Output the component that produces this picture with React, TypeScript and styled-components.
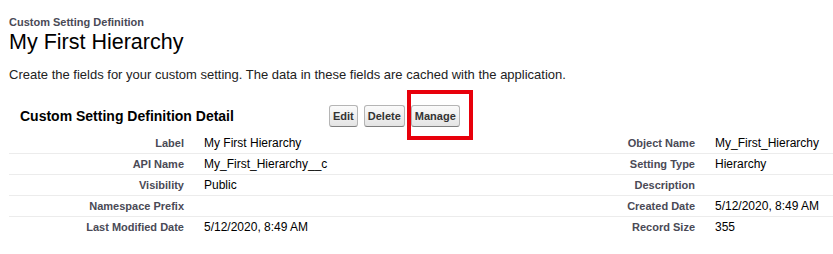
import React from 'react';
import styled, { createGlobalStyle } from 'styled-components';

const GlobalStyle = createGlobalStyle`
    body {
        margin: 0;
        background: #fff;
        font-family: "Liberation Sans", Arial, sans-serif;
        color: #000;
    }
`;

const Page = styled.div`
    width: 833px;
    height: 254px;
    padding: 16px 0 0 9px;
    box-sizing: border-box;
    overflow: hidden;
`;

const PageType = styled.h1`
    margin: 0;
    font-size: 11px;
    line-height: 13px;
    font-weight: bold;
    color: #4a4a56;
`;

const PageTitle = styled.h2`
    margin: 0;
    font-size: 21.5px;
    line-height: 26px;
    font-weight: normal;
    color: #000;
`;

const Intro = styled.p`
    margin: 12px 0 0;
    font-size: 13px;
    line-height: 16px;
    color: #222;
`;

const Block = styled.div`
    margin-top: 16px;
    margin-right: -1px;
`;

const BlockHeader = styled.div`
    display: flex;
    align-items: center;
    height: 34px;
`;

const BlockTitle = styled.h3`
    margin: 0 0 0 11px;
    width: 309px;
    font-size: 14px;
    font-weight: bold;
    color: #000;
`;

const Buttons = styled.div`
    display: flex;
    gap: 6px;
`;

const Button = styled.button<{ $marked?: boolean }>`
    position: relative;
    height: 22px;
    padding: 0 3px;
    font-family: "Liberation Sans", Arial, sans-serif;
    font-size: 11px;
    font-weight: bold;
    color: #333;
    background: linear-gradient(#fbfbfb, #e4e4e4);
    border: 1px solid #b5b5b5;
    border-bottom-color: #7f7f7f;
    border-radius: 3px;

    ${({ $marked }) =>
        $marked &&
        `
        &::after {
            content: '';
            position: absolute;
            left: -5px;
            right: -14px;
            top: -16px;
            bottom: -14px;
            border: 4px solid #e8000b;
        }
    `}
`;

const Detail = styled.div`
    display: grid;
    grid-template-columns: 185px 1fr 110px 129px;
`;

const Cell = styled.div<{ $label?: boolean; $last?: boolean }>`
    height: 21px;
    box-sizing: border-box;
    display: flex;
    align-items: center;
    border-bottom: 1px solid ${({ $last }) => ($last ? 'transparent' : '#ececec')};
    ${({ $label }) =>
        $label
            ? `
        justify-content: flex-end;
        padding-right: 10px;
        font-size: 11px;
        font-weight: bold;
        color: #4a4a56;
    `
            : `
        padding-left: 10px;
        font-size: 12px;
        color: #000;
    `}
`;

const rows: [string, string, string, string][] = [
    ['Label', 'My First Hierarchy', 'Object Name', 'My_First_Hierarchy'],
    ['API Name', 'My_First_Hierarchy__c', 'Setting Type', 'Hierarchy'],
    ['Visibility', 'Public', 'Description', ''],
    ['Namespace Prefix', '', 'Created Date', '5/12/2020, 8:49 AM'],
    ['Last Modified Date', '5/12/2020, 8:49 AM', 'Record Size', '355'],
];

const App = () => {
    return (
        <>
            <GlobalStyle />
            <Page>
                <PageType>Custom Setting Definition</PageType>
                <PageTitle>My First Hierarchy</PageTitle>
                <Intro>Create the fields for your custom setting. The data in these fields are cached with the application.</Intro>
                <Block>
                    <BlockHeader>
                        <BlockTitle>Custom Setting Definition Detail</BlockTitle>
                        <Buttons>
                            <Button>Edit</Button>
                            <Button>Delete</Button>
                            <Button $marked>Manage</Button>
                        </Buttons>
                    </BlockHeader>
                    <Detail>
                        {rows.map((r, i) => {
                            const last = i === rows.length - 1;
                            return (
                                <React.Fragment key={r[0]}>
                                    <Cell $label $last={last}>{r[0]}</Cell>
                                    <Cell $last={last}>{r[1]}</Cell>
                                    <Cell $label $last={last}>{r[2]}</Cell>
                                    <Cell $last={last}>{r[3]}</Cell>
                                </React.Fragment>
                            );
                        })}
                    </Detail>
                </Block>
            </Page>
        </>
    );
};

export default App;
